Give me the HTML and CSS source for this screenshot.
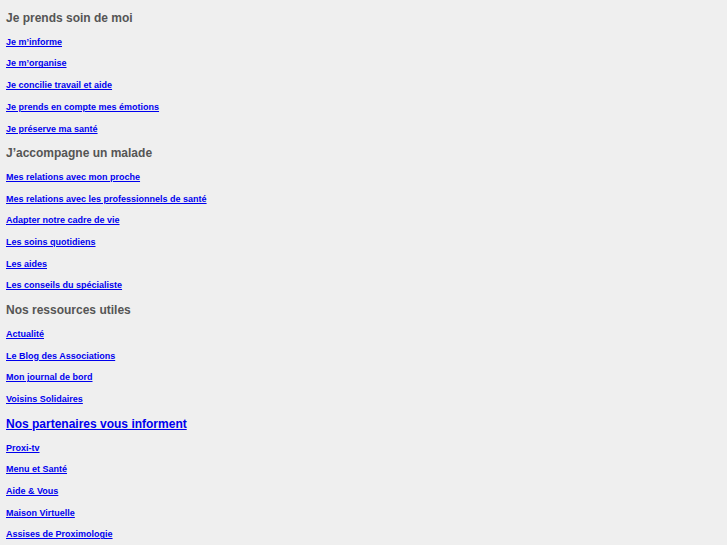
FILE: index.html
```html
<!DOCTYPE html>
<html>
<head>
<title>Proximologie</title>
<link rel="stylesheet" href="styles.css">
</head>
<body>
<div class="menu">
    <h2 class="menu-title">Je prends soin de moi</h2>
    <a class="menu-link" href="#">Je m’informe</a>
    <a class="menu-link" href="#">Je m’organise</a>
    <a class="menu-link" href="#">Je concilie travail et aide</a>
    <a class="menu-link" href="#">Je prends en compte mes émotions</a>
    <a class="menu-link" href="#">Je préserve ma santé</a>

    <h2 class="menu-title">J’accompagne un malade</h2>
    <a class="menu-link" href="#">Mes relations avec mon proche</a>
    <a class="menu-link" href="#">Mes relations avec les professionnels de santé</a>
    <a class="menu-link" href="#">Adapter notre cadre de vie</a>
    <a class="menu-link" href="#">Les soins quotidiens</a>
    <a class="menu-link" href="#">Les aides</a>
    <a class="menu-link" href="#">Les conseils du spécialiste</a>

    <h2 class="menu-title">Nos ressources utiles</h2>
    <a class="menu-link" href="#">Actualité</a>
    <a class="menu-link" href="#">Le Blog des Associations</a>
    <a class="menu-link" href="#">Mon journal de bord</a>
    <a class="menu-link" href="#">Voisins Solidaires</a>

    <h2 class="menu-title"><a class="partners" href="#">Nos partenaires vous informent</a></h2>
    <a class="menu-link" href="#">Proxi-tv</a>
    <a class="menu-link" href="#">Menu et Santé</a>
    <a class="menu-link" href="#">Aide &amp; Vous</a>
    <a class="menu-link" href="#">Maison Virtuelle</a>
    <a class="menu-link" href="#">Assises de Proximologie</a>
</div>
</body>
</html>
```

FILE: styles.css
```css
body{
    margin: 0;
    padding: 5px 6px;
    background-color: #efefef;
    font-family: "Liberation Sans", Arial, sans-serif;
}

.menu{
    display: flex;
    flex-direction: column;
    align-items: flex-start;
}

.menu-title{
    margin: 0;
    height: 26.8px;
    line-height: 26.8px;
    font-size: 12px;
    font-weight: bold;
    color: #555555;
}

.menu-link{
    display: block;
    height: 21.7px;
    line-height: 21.7px;
    font-size: 9px;
    font-weight: bold;
    color: #0000ee;
    text-decoration: underline;
}

.partners{
    font-size: 12px;
    color: #0000ee;
    text-decoration: underline;
}
```
